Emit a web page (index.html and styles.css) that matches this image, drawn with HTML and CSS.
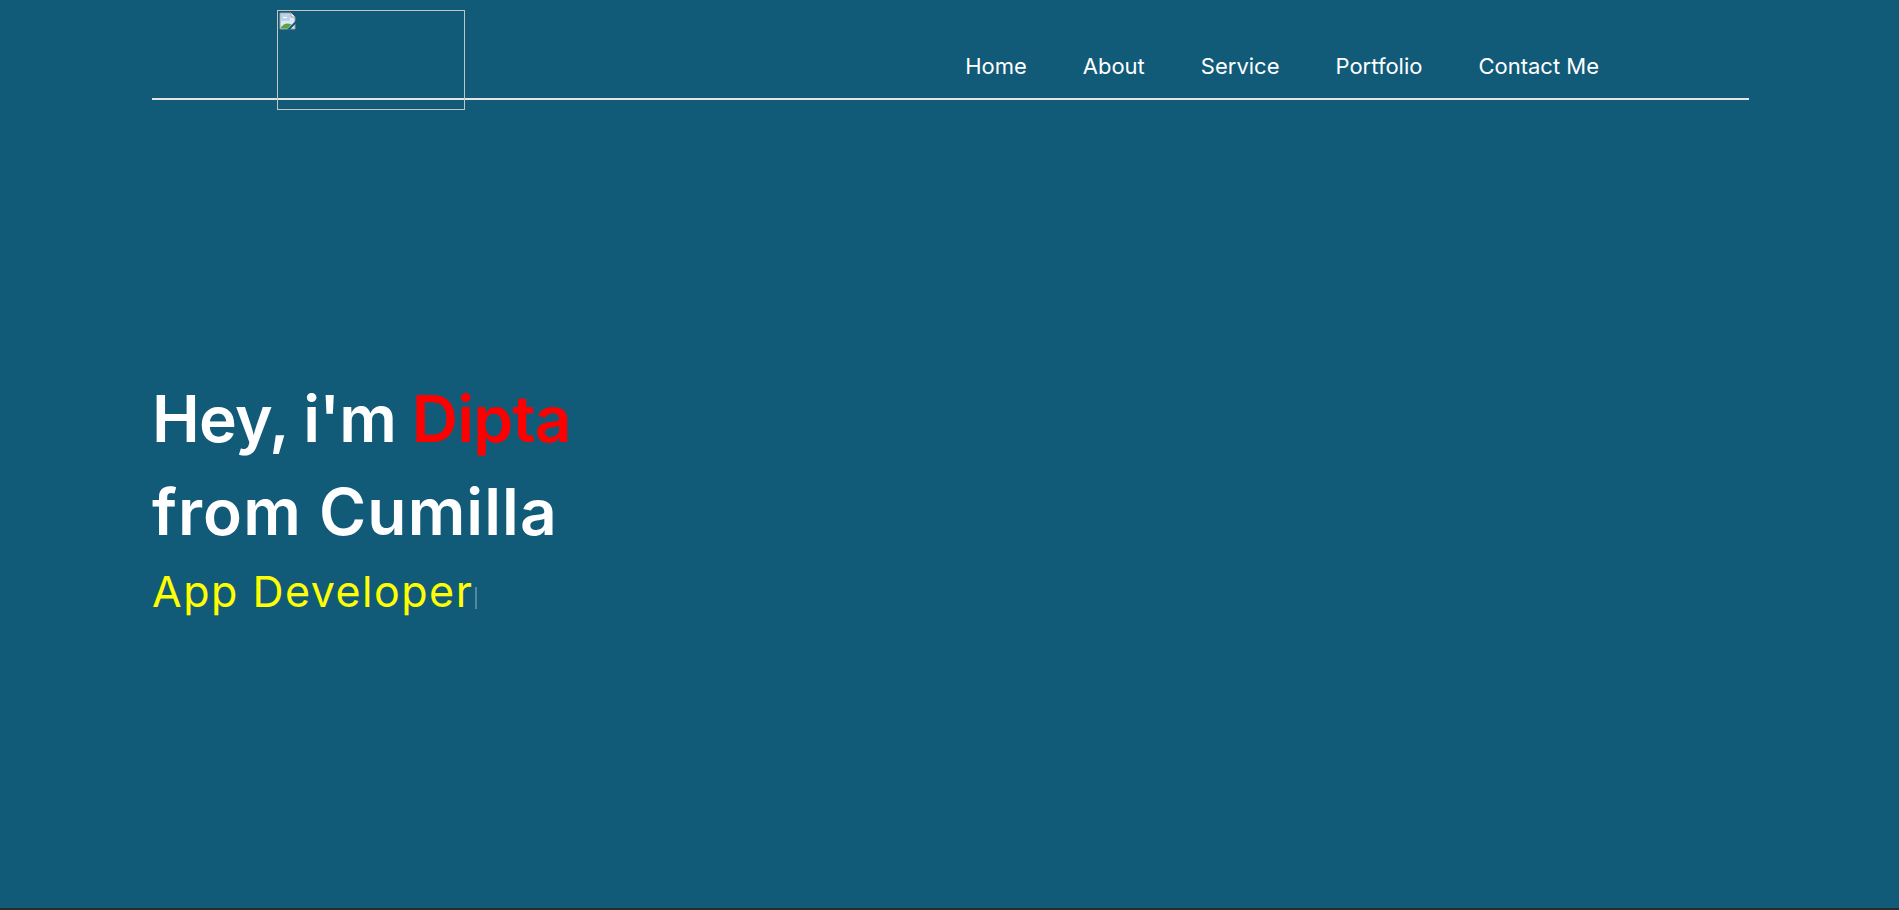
FILE: index.html
```html
<!DOCTYPE html>
<html lang="en">
<head>
<meta charset="utf-8">
<title>Dipta</title>
<link rel="stylesheet" href="styles.css">
</head>
<body>
<div class="page">
  <header class="header">
    <div class="logo">
      <svg class="broken" width="18" height="18" viewBox="0 0 18 18">
        <path d="M1 1h11l4 4v12H1z" fill="#dde8f4" stroke="#9a9a9a" stroke-width="1"/>
        <path d="M12 1v4h4" fill="#fff" stroke="#9a9a9a" stroke-width="1"/>
        <rect x="2" y="2" width="9" height="7" fill="#b9d3ef"/>
        <path d="M4 5h4v1H4z" fill="#fff"/>
        <path d="M1.5 16.5c2-5 7-6 11-4l-4 4z" fill="#5aa542"/>
        <path d="M8 17.5L17.5 8v3L11 17.5z" fill="#115b79"/>
      </svg>
    </div>
    <nav class="nav">
      <a class="nav-link" href="#">Home</a>
      <a class="nav-link" href="#">About</a>
      <a class="nav-link" href="#">Service</a>
      <a class="nav-link" href="#">Portfolio</a>
      <a class="nav-link" href="#">Contact Me</a>
    </nav>
  </header>
  <section class="hero">
    <h1 class="title"><span class="line-one">Hey, i'm <span class="name">Dipta</span></span><br><span class="line-two">from Cumilla</span></h1>
    <p class="role">App Developer<span class="cursor"></span></p>
  </section>
</div>
</body>
</html>
```

FILE: styles.css
```css
* { box-sizing: border-box; }
html, body { margin: 0; padding: 0; }
body {
  background: #2b2b2b;
  font-family: "Inter", "Liberation Sans", sans-serif;
  color: #fff;
}
.page {
  height: 908px;
  background: #115b79;
  padding: 0 150px 0 152px;
  overflow: hidden;
}
.header {
  display: flex;
  align-items: flex-start;
  height: 100px;
  border-bottom: 2px solid #e4e4e4;
}
.logo {
  margin-left: 125px;
  margin-top: 10px;
  width: 188px;
  height: 100px;
  flex: none;
  border: 1px solid #c4c4c4;
  padding: 1px;
}
.broken { display: block; }
.nav {
  margin-left: auto;
  margin-right: 150px;
  margin-top: 53px;
  display: flex;
  gap: 56px;
}
.nav-link {
  color: #fff;
  text-decoration: none;
  font-size: 22px;
  line-height: 27px;
  letter-spacing: 0;
}
.hero {
  padding-top: 272px;
}
.title {
  margin: 0;
  font-size: 64px;
  font-weight: 600;
  line-height: 93px;
}
.line-one { letter-spacing: -0.7px; }
.line-two { letter-spacing: 1.1px; }
.name { color: #ff0000; }
.role {
  margin: 8px 0 0;
  font-size: 43px;
  line-height: 50px;
  color: #ffff00;
  letter-spacing: 1.5px;
}
.cursor {
  display: inline-block;
  width: 2px;
  height: 22px;
  margin-left: 2px;
  vertical-align: -2px;
  background: rgba(255, 255, 255, 0.28);
}
```
